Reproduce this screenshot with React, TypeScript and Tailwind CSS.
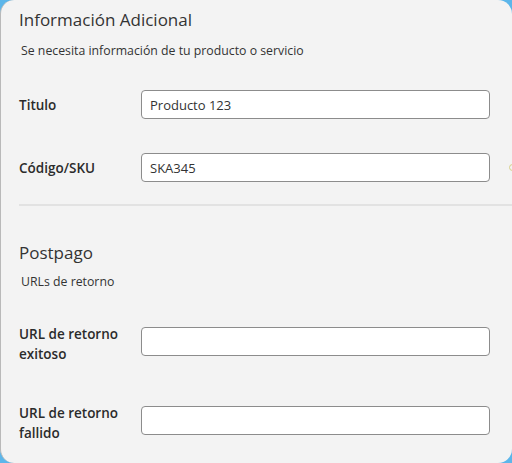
import React from 'react';

function Field({ label, value, tall }: { label: React.ReactNode; value?: string; tall?: boolean }) {
  return (
    <div className="flex items-center">
      <div className={`w-[122px] shrink-0 text-[13.5px] font-semibold leading-5 text-[#2b2b2b] ${tall ? 'pt-[5px]' : ''}`}>{label}</div>
      <input
        readOnly
        value={value ?? ''}
        className="h-[29px] w-[349px] rounded-[4px] border border-[#8c8c8c] bg-white px-2 text-[13px] text-[#333] outline-none"
      />
    </div>
  );
}

export default function App() {
  return (
    <div className="h-[463px] w-[512px] overflow-hidden bg-[#5cb6ea]" style={{ fontFamily: '"Open Sans", "Noto Sans", sans-serif' }}>
      <div className="relative flex h-full flex-col rounded-[14px] border-l border-[#b9b9b9] bg-[#f3f3f3] pl-[18px]">
        <h2 className="mt-[8px] text-[17px] leading-6 text-[#333]">Información Adicional</h2>
        <p className="mt-[10px] pl-[2px] text-[12.3px] leading-[18px] text-[#333]">Se necesita información de tu producto o servicio</p>

        <div className="mt-[30px] flex flex-col gap-[34px]">
          <Field label="Titulo" value="Producto 123" />
          <Field label="Código/SKU" value="SKA345" />
        </div>
        <div className="absolute right-[-4px] top-[164px] h-[7px] w-[7px] rounded-full border border-[#d8d08a]" />

        <div className="mt-[22px] h-[2px] bg-[#e2e2e2]" />

        <h2 className="mt-[35px] text-[17px] leading-6 text-[#333]">Postpago</h2>
        <p className="mt-[8px] pl-[2px] text-[12.3px] leading-[18px] text-[#333]">URLs de retorno</p>

        <div className="mt-[28px] flex flex-col gap-[34px]">
          <Field tall label={<>URL de retorno<br />exitoso</>} />
          <Field tall label={<>URL de retorno<br />fallido</>} />
        </div>
      </div>
    </div>
  );
}
